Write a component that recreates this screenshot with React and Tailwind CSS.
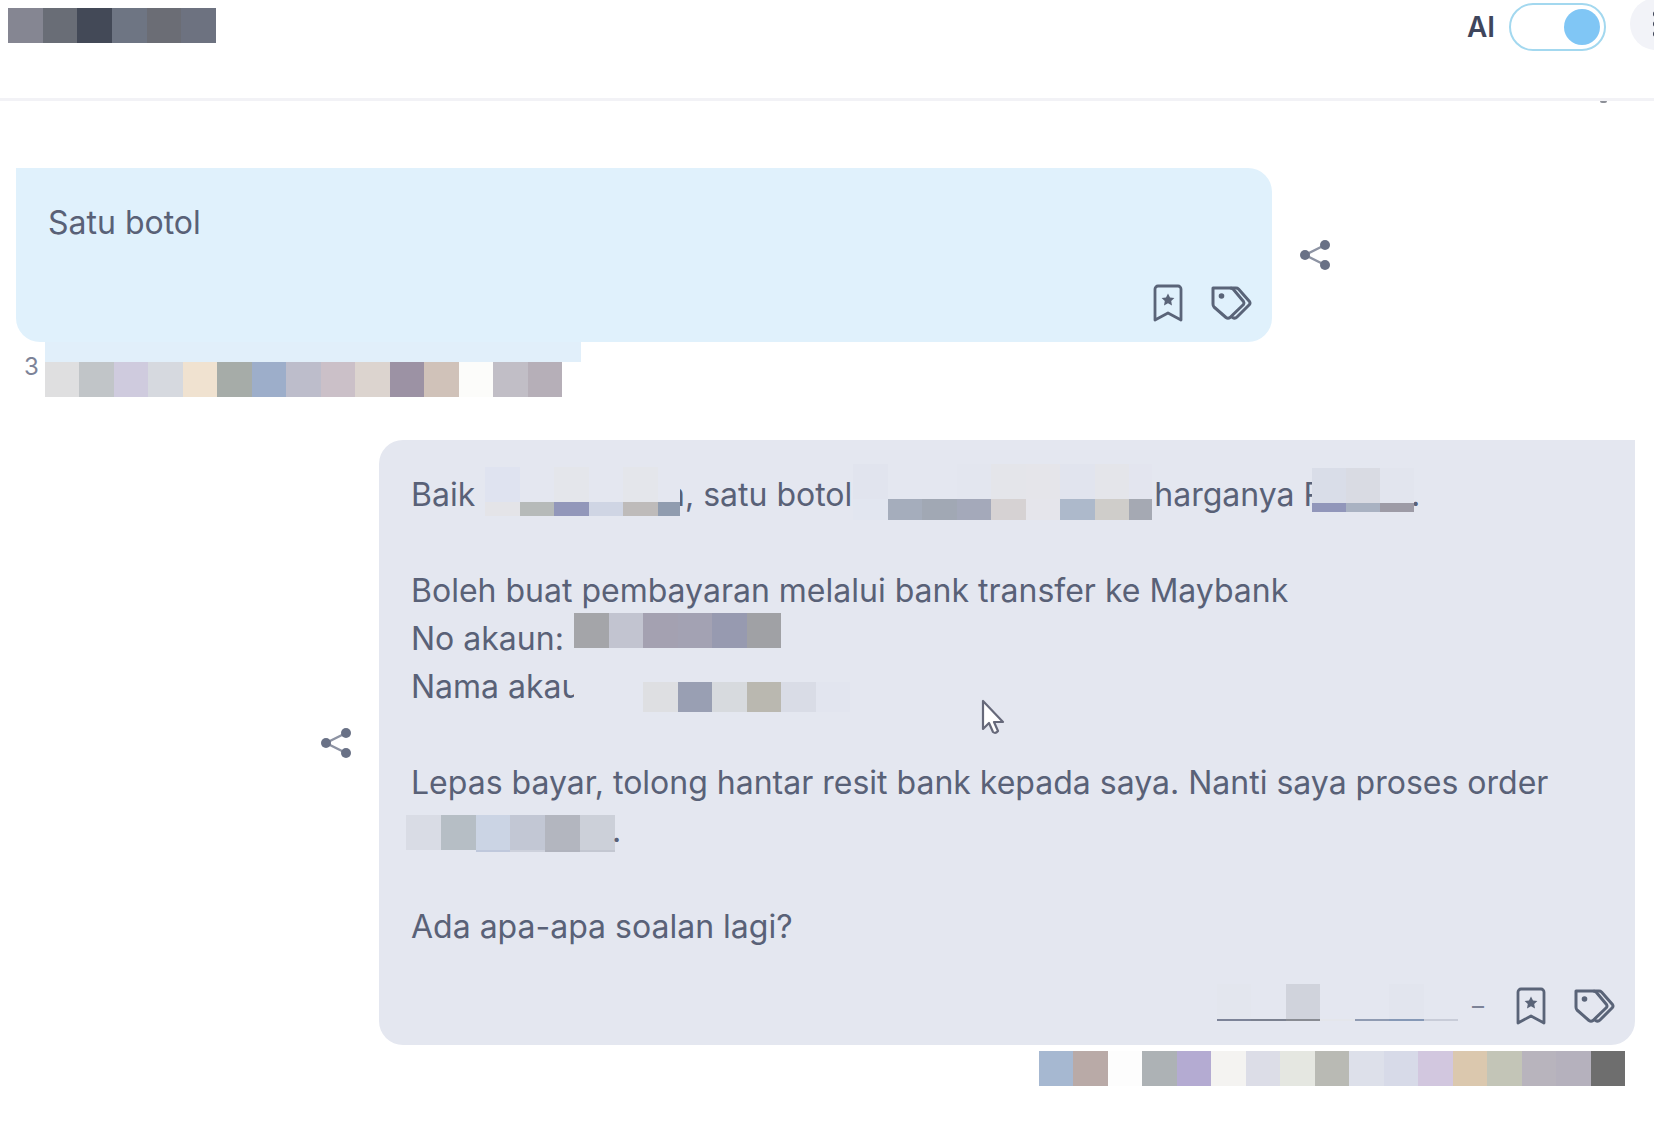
import React from "react";

function Mosaic({ cells, className, last = "flex-1" }) {
  return (
    <span aria-hidden="true" className={`flex shrink-0 ${className}`}>
      {cells.map((c, i) => (
        <span key={i} className={`${i === cells.length - 1 ? last : "flex-1"} ${c}`} />
      ))}
    </span>
  );
}

function ShareButton() {
  return (
    <button type="button" aria-label="Share" className="shrink-0 text-[#697186]">
      <svg width="30" height="30" viewBox="0 0 30 30" fill="currentColor" className="block">
        <path d="M25 5 5 15l20 10" fill="none" stroke="#8d93a3" strokeWidth="2.400" />
        <circle cx="5" cy="15" r="5" />
        <circle cx="25" cy="5" r="5" />
        <circle cx="25" cy="25" r="5" />
      </svg>
    </button>
  );
}

function MessageActions() {
  return (
    <div className="flex items-center gap-[27px] text-[#5a6478]">
      <button type="button" aria-label="Bookmark">
        <svg width="30" height="38" viewBox="0 0 30 38" fill="none" stroke="currentColor" strokeWidth="2.8" className="block">
          <path d="M2 36V5a3 3 0 0 1 3-3h20a3 3 0 0 1 3 3v31l-13-7z" strokeLinejoin="round" />
          <path d="m15 9.500 2 4 4.400.600-3.200 3 .8 4.400-4-2.200-4 2.200.8-4.400-3.200-3 4.400-.600z" fill="currentColor" stroke="none" />
        </svg>
      </button>
      <button type="button" aria-label="Tags">
        <svg width="42" height="38" viewBox="0 0 42 38" fill="none" stroke="currentColor" strokeWidth="3" strokeLinejoin="round" strokeLinecap="round" className="block">
          <path d="M3 4h17q2 0 3.500 1.500L33.500 17.500q1 1.500 0 3L20 33.500q-2 1.500-4 0L4 23q-1-1-1-3z" />
          <path d="M21 4h5q1.500 0 2.500 1L39.500 17.500q1 1.500 0 3L27 33q-2 2-4.500.5" />
          <circle cx="11.500" cy="12" r="2.800" fill="currentColor" stroke="none" />
        </svg>
      </button>
    </div>
  );
}

function Header() {
  return (
    <header className="flex h-[101px] items-start justify-between overflow-hidden border-b-3 border-[#f2f2f6]">
      <Mosaic
        className="mt-2 ml-2 h-[35px] w-[208px]"
        cells={["bg-[#858692]", "bg-[#696d76]", "bg-[#434957]", "bg-[#6e7583]", "bg-[#6b6d75]", "bg-[#6d7280]"]}
      />
      <div className="-mr-7 flex items-start">
        <label htmlFor="ai-switch" className="mt-[7px] mr-[14px] text-[28px] leading-10 font-semibold text-[#3f465c]">
          AI
        </label>
        <input
          id="ai-switch"
          type="checkbox"
          role="switch"
          defaultChecked
          className="mt-[3px] mr-6 flex h-12 w-[97px] appearance-none items-center rounded-full border-2 border-[#a3d8ef] bg-white px-1 before:size-9 before:rounded-full before:bg-[#80c6f5] checked:justify-end"
        />
        <button
          type="button"
          aria-label="More options"
          className="-mt-[2px] flex size-[52px] flex-col items-center justify-center gap-1 rounded-full bg-[#f2f3f8]"
        >
          <span className="size-[6px] rounded-full bg-[#353b4e]" />
          <span className="size-[6px] rounded-full bg-[#353b4e]" />
          <span className="size-[6px] rounded-full bg-[#353b4e]" />
        </button>
      </div>
    </header>
  );
}

export default function App() {
  return (
    <div className="relative min-h-screen overflow-hidden bg-white font-['Inter',sans-serif] text-[#596177]">
      <Header />
      <div aria-hidden="true" className="mr-[47px] ml-auto h-[2px] w-[7px] rounded-b-full bg-[#8d9098]" />

      <main className="pt-[65px] pr-[19px] pl-4 text-[32px] leading-[48px]">
        <section className="flex items-center">
          <div className="flex-1 rounded-3xl rounded-tl-none bg-[#e0f1fc] px-8 pt-[31px] pb-5">
            <p>Satu botol</p>
            <div className="-mr-3 mt-[37px] flex justify-end">
              <MessageActions />
            </div>
          </div>
          <div className="flex w-[363px] pl-7">
            <ShareButton />
          </div>
        </section>

        <div className="flex h-[98px] items-start">
          <span className="mt-[9px] ml-2 w-[21px] text-2xl leading-8 text-[#7d8398]">3</span>
          <div>
            <div className="h-5 w-[536px] bg-[#e1effa]" />
            <Mosaic
              className="h-[35px] w-[517px]"
              cells={[
                "bg-[#dfdfe0]", "bg-[#c1c5c8]", "bg-[#cfcbde]", "bg-[#d6d9df]", "bg-[#f0e2d0]",
                "bg-[#a6aca8]", "bg-[#9daeca]", "bg-[#bdbdcb]", "bg-[#cbc0c8]", "bg-[#dcd4cf]",
                "bg-[#9c92a4]", "bg-[#d0c2b9]", "bg-[#fcfcfa]", "bg-[#c1bec6]", "bg-[#b6afb8]",
              ]}
            />
          </div>
        </div>

        <section className="flex items-center">
          <div className="flex w-[363px] justify-end pr-7">
            <ShareButton />
          </div>
          <div className="flex-1 rounded-3xl rounded-tr-none bg-[#e4e7f0] pt-[31px] pr-5 pb-5 pl-8">
            <p className="flex h-12 items-start whitespace-pre">
              <span className="w-[74px]">Baik</span>
              <span className="relative z-10 -mt-1 -mr-[14px] w-[195px]">
                <Mosaic
                  className="h-[35px]"
                  last="w-[22px]"
                  cells={["bg-[#dfe3f0]", "bg-[#e4e7f0]", "bg-[#e4e6eb]", "bg-[#e4e7f0]", "bg-[#e4e6eb]", "bg-[#e4e7f0]"]}
                />
                <Mosaic
                  className="h-[14px]"
                  last="w-[22px]"
                  cells={["bg-[#e4e4e8]", "bg-[#b6bab9]", "bg-[#9297ba]", "bg-[#cfd5e4]", "bg-[#bebbba]", "bg-[#909caf]"]}
                />
              </span>
              <span>n, satu botol</span>
              <span className="-mt-[7px] ml-px w-[299px]">
                <Mosaic
                  className="h-[35px]"
                  last="w-[23px]"
                  cells={["bg-[#e1e4ee]", "bg-[#e4e7f0]", "bg-[#e4e7f0]", "bg-[#e3e6ef]", "bg-[#e4e5ea]", "bg-[#e5e5ea]", "bg-[#e1e4ee]", "bg-[#e4e5ea]", "bg-[#e3e5ef]"]}
                />
                <Mosaic
                  className="h-[21px]"
                  last="w-[23px]"
                  cells={["bg-[#e2e6f0]", "bg-[#a5adbc]", "bg-[#a1a8b4]", "bg-[#a4a9ba]", "bg-[#d6d2d3]", "bg-[#e5e5eb]", "bg-[#adb9cb]", "bg-[#cfcdca]", "bg-[#a5a9b3]"]}
                />
              </span>
              <span className="ml-[2px]">harganya R</span>
              <span className="relative z-10 -mt-[3px] -ml-3 w-[102px]">
                <Mosaic className="h-[35px]" cells={["bg-[#d9dde8]", "bg-[#d9dbe3]", "bg-[#e2e5ee]"]} />
                <Mosaic className="h-[9px]" cells={["bg-[#9196ba]", "bg-[#a9b2c2]", "bg-[#9d9ba6]"]} />
              </span>
              <span className="-ml-[3px]">.</span>
            </p>
            <p className="mt-12">Boleh buat pembayaran melalui bank transfer ke Maybank</p>
            <p className="flex h-12 items-start">
              <span className="w-[163px] whitespace-pre">No akaun:</span>
              <Mosaic
                className="-mt-[2px] h-[35px] w-[207px]"
                cells={["bg-[#a4a5a9]", "bg-[#c2c4d0]", "bg-[#a4a1b1]", "bg-[#a3a2b3]", "bg-[#979ab0]", "bg-[#a0a1a5]"]}
              />
            </p>
            <p className="flex h-12 items-start">
              <span className="w-[163px] whitespace-pre">Nama akaun</span>
              <span className="relative z-10 w-[276px]">
                <span className="block h-[19px] bg-[#e4e7f0]" />
                <Mosaic
                  className="h-[30px]"
                  cells={["bg-[#e4e7f0]", "bg-[#e4e7f0]", "bg-[#dedfe2]", "bg-[#999fb3]", "bg-[#d7dade]", "bg-[#bab8b0]", "bg-[#d9dce6]", "bg-[#e2e5ef]"]}
                />
              </span>
            </p>
            <p className="mt-12">Lepas bayar, tolong hantar resit bank kepada saya. Nanti saya proses order</p>
            <p className="-ml-[5px] flex h-12 items-start">
              <span className="mt-2 w-[209px]">
                <Mosaic
                  className="h-[35px]"
                  cells={["bg-[#d9dce5]", "bg-[#b6bec5]", "bg-[#cbd4e4]", "bg-[#c2c7d4]", "bg-[#b3b6bf]", "bg-[#ccd0d9]"]}
                />
                <Mosaic
                  className="h-[2px]"
                  cells={["bg-transparent", "bg-transparent", "bg-[#bfc8dc]", "bg-[#cdd1dc]", "bg-[#b0b3bd]", "bg-[#c3c7d1]"]}
                />
              </span>
              <span className="-ml-[3px]">.</span>
            </p>
            <p className="mt-12">Ada apa-apa soalan lagi?</p>
            <div className="mt-[36px] flex h-[38px] items-center justify-end">
              <span aria-hidden="true" className="-mt-2 w-[241px]">
                <Mosaic
                  className="h-[35px]"
                  cells={["bg-[#e3e6ee]", "bg-transparent", "bg-[#d0d3dc]", "bg-transparent", "bg-transparent", "bg-[#e2e5ee]", "bg-transparent"]}
                />
                <Mosaic
                  className="h-[2px]"
                  cells={["bg-[#7c8398]", "bg-[#7b8190]", "bg-[#888b92]", "bg-[#e4e6eb]", "bg-[#8f9bb2]", "bg-[#8598b6]", "bg-[#c8ccd8]"]}
                />
              </span>
              <span className="mr-8 ml-[14px] text-2xl leading-8 text-[#7c8397]">–</span>
              <MessageActions />
            </div>
          </div>
        </section>

        <Mosaic
          className="mt-[6px] mr-[10px] ml-auto h-[35px] w-[586px]"
          cells={[
            "bg-[#a6b8d1]", "bg-[#b9aaa7]", "bg-[#fdfdfd]", "bg-[#adb2b5]", "bg-[#b4abd2]", "bg-[#f4f3f1]",
            "bg-[#dcdde7]", "bg-[#e5e7e1]", "bg-[#b9bab4]", "bg-[#dde0ea]", "bg-[#d7dae8]", "bg-[#d2c7df]",
            "bg-[#dbc8ae]", "bg-[#c3c5b7]", "bg-[#b8b4bd]", "bg-[#b5b1bd]", "bg-[#6e6e6e]",
          ]}
        />
      </main>

      <svg aria-hidden="true" width="24" height="37" viewBox="0 0 24 37" className="pointer-events-none absolute top-[698px] left-[981px]">
        <path d="M2 3v28l6-6 4 9q2.500 2 5-1l-4-9h9z" fill="#fff" stroke="#66697a" strokeWidth="2.200" strokeLinejoin="round" />
      </svg>
    </div>
  );
}
